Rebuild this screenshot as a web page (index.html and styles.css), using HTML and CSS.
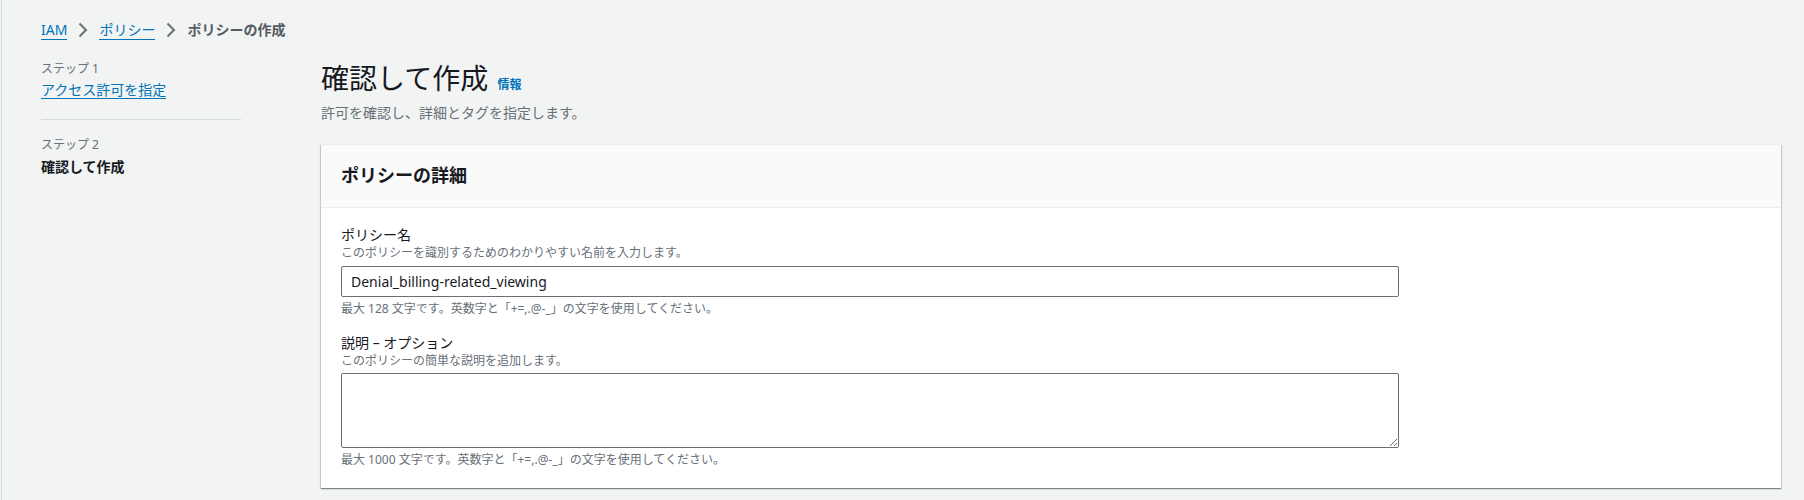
FILE: index.html
```html
<!DOCTYPE html>
<html lang="ja">
<head>
    <meta charset="UTF-8" />
    <meta name="viewport" content="width=device-width, initial-scale=1.0" />
    <title>ポリシーの作成</title>
    <link rel="stylesheet" href="styles.css">
</head>
<body>
    <div class="page">

        <nav class="breadcrumbs">
            <a href="#">IAM</a>
            <svg class="chevron" viewBox="0 0 16 16" width="16" height="16"><path d="M4.5 1.5l6.5 6.5-6.5 6.5" /></svg>
            <a href="#">ポリシー</a>
            <svg class="chevron" viewBox="0 0 16 16" width="16" height="16"><path d="M4.5 1.5l6.5 6.5-6.5 6.5" /></svg>
            <span class="current">ポリシーの作成</span>
        </nav>

        <div class="layout">
            <ul class="steps">
                <li class="step">
                    <small>ステップ 1</small>
                    <a href="#">アクセス許可を指定</a>
                </li>
                <li class="step">
                    <small>ステップ 2</small>
                    <span class="active">確認して作成</span>
                </li>
            </ul>

            <main class="content">
                <h1>確認して作成 <a class="info" href="#">情報</a></h1>
                <p class="subtitle">許可を確認し、詳細とタグを指定します。</p>

                <section class="panel">
                    <div class="panel-header">
                        <h2>ポリシーの詳細</h2>
                    </div>
                    <div class="panel-body">
                        <div class="field">
                            <label for="policyName">ポリシー名</label>
                            <p class="hint">このポリシーを識別するためのわかりやすい名前を入力します。</p>
                            <input id="policyName" type="text" value="Denial_billing-related_viewing">
                            <p class="constraint">最大 128 文字です。英数字と「+=,.@-_」の文字を使用してください。</p>
                        </div>
                        <div class="field">
                            <label for="policyDesc">説明 – オプション</label>
                            <p class="hint">このポリシーの簡単な説明を追加します。</p>
                            <textarea id="policyDesc"></textarea>
                            <p class="constraint">最大 1000 文字です。英数字と「+=,.@-_」の文字を使用してください。</p>
                        </div>
                    </div>
                </section>
            </main>
        </div>

    </div>
</body>
</html>
```

FILE: styles.css
```css
body {
    margin: 0;
    background-color: #f2f3f3;
    font-family: "Noto Sans", "Noto Sans CJK JP", sans-serif;
    color: #16191f;
    font-size: 14px;
    line-height: 20px;
}

.page {
    margin-left: 1px;
    border-left: 1px solid #d5dbdb;
    padding: 20px 23px 20px 39px;
    min-height: 460px;
}

a {
    color: #0073bb;
    text-decoration: none;
    border-bottom: 1px solid #0073bb;
}

/* breadcrumbs */
.breadcrumbs {
    display: flex;
    align-items: center;
    height: 20px;
}

.breadcrumbs a {
    line-height: 19px;
}

.chevron {
    margin: 0 8px;
    fill: none;
    stroke: #687078;
    stroke-width: 2;
}

.current {
    color: #545b64;
    font-weight: bold;
}

.layout {
    display: flex;
    margin-top: 20px;
}

/* wizard steps */
.steps {
    list-style: none;
    margin: 0 80px 0 0;
    padding: 0;
    width: 200px;
    flex-shrink: 0;
}

.step {
    display: flex;
    flex-direction: column;
    align-items: flex-start;
    padding-bottom: 20px;
}

    .step + .step {
        border-top: 1px solid #d5dbdb;
        padding-top: 16px;
    }

.step small {
    font-size: 12px;
    line-height: 16px;
    color: #687078;
    margin-top: 1px;
}

.step a {
    margin-top: 4px;
    line-height: 17px;
}

.step .active {
    font-weight: bold;
    margin-top: 4px;
}

/* main column */
.content {
    flex: 1;
}

h1 {
    margin: 0;
    font-size: 28px;
    line-height: 36px;
    font-weight: normal;
}

.info {
    font-size: 12px;
    font-weight: bold;
    border-bottom: none;
    margin-left: 2px;
}

.subtitle {
    margin: 0;
    color: #687078;
}

.panel {
    margin-top: 21px;
    background-color: #fff;
    box-shadow: 0 1px 1px 0 rgba(0,28,36,0.3), 1px 1px 1px 0 rgba(0,28,36,0.15), -1px 1px 1px 0 rgba(0,28,36,0.15);
    border-top: 1px solid #eaeded;
}

.panel-header {
    background-color: #fafafa;
    border-bottom: 1px solid #eaeded;
    padding: 18px 20px 20px;
}

h2 {
    margin: 0;
    font-size: 18px;
    line-height: 24px;
    font-weight: bold;
}

.panel-body {
    padding: 17px 20px 20px;
}

.field + .field {
    margin-top: 16px;
}

label {
    display: block;
    font-weight: normal;
}

.hint, .constraint {
    margin: 0;
    font-size: 12px;
    line-height: 16px;
    color: #687078;
}

input, textarea {
    display: block;
    box-sizing: border-box;
    width: 100%;
    max-width: 1058px;
    border: 1px solid #687078;
    border-radius: 2px;
    font-family: inherit;
    font-size: 14px;
    color: #16191f;
    padding: 4px 9px;
}

input {
    height: 31px;
    margin-top: 5px;
}

textarea {
    height: 75px;
    margin-top: 4px;
    resize: vertical;
}

.constraint {
    margin-top: 4px;
}
```
